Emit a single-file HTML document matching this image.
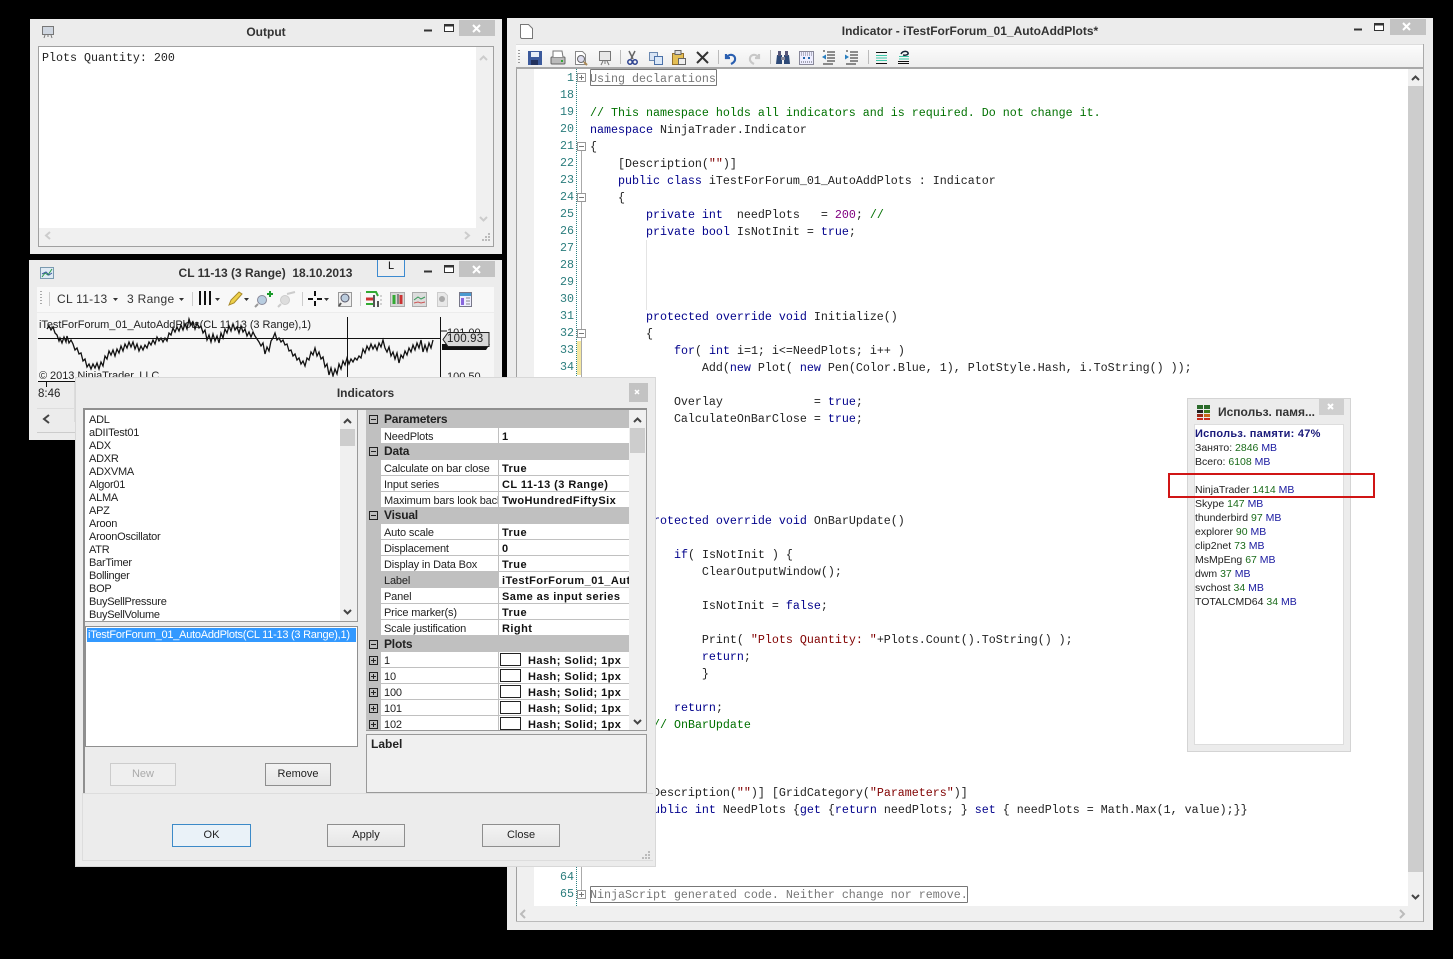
<!DOCTYPE html>
<html><head><meta charset="utf-8"><title>Indicator</title>
<style>
html,body{margin:0;padding:0;background:#000}
body{position:relative;width:1453px;height:959px;overflow:hidden;font-family:"Liberation Sans",sans-serif;font-size:11px;color:#111}
div,pre,span.a,svg{position:absolute}
svg{overflow:visible}
.win{background:#ececec;box-sizing:border-box}
.title{font-weight:bold;font-size:12px;color:#333;text-align:center;white-space:nowrap}
.close{background:#c3c3c3}
.t{white-space:nowrap;line-height:16px}
pre{margin:0;font-family:"Liberation Mono",monospace;font-size:11.67px;line-height:17px;color:#222}
.k{color:#00008b}.c{color:#007000}.s{color:#800000}
.g{background:#c0c0c0}
.gh{font-weight:bold;font-size:12px;color:#222;letter-spacing:-.2px}
.row{left:381px;width:248px;height:15px;background:#fff}
.n{left:384px;white-space:nowrap;line-height:16px;color:#222;width:114px;overflow:hidden;letter-spacing:-.15px;margin-top:1px;height:14px}
.v{left:502px;white-space:nowrap;font-weight:bold;line-height:16px;color:#111;font-size:11px;letter-spacing:.45px;width:127px;overflow:hidden;margin-top:1px;height:15px}
.btn{box-sizing:border-box;border:1px solid #8e8e8e;background:linear-gradient(#f3f3f3,#e6e6e6);text-align:center;font-size:11px;line-height:21px;color:#222}
.swatch{left:500px;width:19px;height:11px;border:1px solid #222;background:#fff}
.m{left:1195px;white-space:nowrap;font-size:10.5px;line-height:14px;color:#222;margin-top:1px}
.gn{color:#1a6b1a}.bl{color:#1a1aa0}
.li{left:89px;white-space:nowrap;font-size:11px;letter-spacing:-.25px;line-height:13px;color:#222;margin-top:1px}
</style></head><body>

<!-- EDITOR WINDOW -->
<div class="win" style="left:507px;top:18px;width:926px;height:912px"></div>
<div class="title" style="left:507px;top:24px;width:926px">Indicator - iTestForForum_01_AutoAddPlots*</div>
<div class="close" style="left:1390px;top:19px;width:36px;height:16px"></div>
<div style="left:516px;top:44px;width:908px;height:25px;background:linear-gradient(#fcfcfc,#eeeeee);border-top:1px solid #ddd;box-sizing:border-box;border-bottom:2px solid #a8a8a8"></div>
<div style="left:516px;top:69px;width:908px;height:838px;background:#fff"></div>
<div style="left:516px;top:69px;width:1px;height:852px;background:#a0a0a0"></div>
<div style="left:517px;top:69px;width:17px;height:837px;background:#f0f0f0"></div>
<div style="left:1408px;top:69px;width:16px;height:838px;background:#f0f0f0"></div>
<div style="left:1408px;top:86px;width:16px;height:786px;background:#cdcdcd"></div>
<div style="left:517px;top:906px;width:907px;height:15px;background:#f0f0f0"></div>
<div style="left:516px;top:921px;width:908px;height:1px;background:#bbb"></div>
<div style="left:1423px;top:44px;width:1px;height:878px;background:#aaa"></div>
<div style="left:576px;top:69px;width:0;height:837px;border-left:1px dotted #2b7f7f"></div>
<div style="left:577px;top:341px;width:4px;height:34px;background:#f5e8a0"></div>
<div style="left:581px;top:151px;width:1px;height:740px;background:#aaa"></div>
<div style="left:646px;top:240px;width:1px;height:70px;background:#e4e4e4"></div>
<pre style="left:534px;top:70px;width:40px;text-align:right;color:#2b7d7d">1
18
19
20
21
22
23
24
25
26
27
28
29
30
31
32
33
34</pre>
<pre style="left:534px;top:869px;width:40px;text-align:right;color:#2b7d7d">64
65</pre>
<pre style="left:590px;top:71px"><span style="color:#777">Using declarations</span>

<span class="c">// This namespace holds all indicators and is required. Do not change it.</span>
<span class="k">namespace</span> NinjaTrader.Indicator
{
    [Description(<span class="s">""</span>)]
    <span class="k">public class</span> iTestForForum_01_AutoAddPlots : Indicator
    {
        <span class="k">private int</span>  needPlots   = <span style="color:#800080">200</span>; <span class="c">//</span>
        <span class="k">private bool</span> IsNotInit = <span class="k">true</span>;




        <span class="k">protected override void</span> Initialize()
        {
            <span class="k">for</span>( <span class="k">int</span> i=1; i&lt;=NeedPlots; i++ )
                Add(<span class="k">new</span> Plot( <span class="k">new</span> Pen(Color.Blue, 1), PlotStyle.Hash, i.ToString() ));

            Overlay             = <span class="k">true</span>;
            CalculateOnBarClose = <span class="k">true</span>;





        <span class="k">protected override void</span> OnBarUpdate()

            <span class="k">if</span>( IsNotInit ) {
                ClearOutputWindow();

                IsNotInit = <span class="k">false</span>;

                Print( <span class="s">"Plots Quantity: "</span>+Plots.Count().ToString() );
                <span class="k">return</span>;
                }

            <span class="k">return</span>;
        }<span class="c">// OnBarUpdate</span>



        [Description(<span class="s">""</span>)] [GridCategory(<span class="s">"Parameters"</span>)]
        <span class="k">public int</span> NeedPlots {<span class="k">get</span> {<span class="k">return</span> needPlots; } <span class="k">set</span> { needPlots = Math.Max(1, value);}}




<span style="color:#777">NinjaScript generated code. Neither change nor remove.</span></pre>
<div style="left:590px;top:69px;width:125px;height:15px;border:1px solid #777;border-radius:1px"></div>
<div style="left:590px;top:886px;width:376px;height:15px;border:1px solid #777;border-radius:1px"></div>

<svg style="left:0;top:0" width="1453" height="959" fill="none">
<!-- fold boxes -->
<g stroke="#999" fill="#fff"><rect x="577.500" y="73.500" width="8" height="8"/><rect x="577.500" y="142.500" width="8" height="8"/><rect x="577.500" y="193.500" width="8" height="8"/><rect x="577.500" y="329.500" width="8" height="8"/><rect x="577.500" y="890.500" width="8" height="8"/></g>
<path d="M579 77.500h5M581.500 75v5M579 146.500h5M579 197.500h5M579 333.500h5M579 894.500h5M581.500 892v5" stroke="#777"/>
<!-- editor doc icon -->
<path d="M520.500 24.500h8l4 4v10h-11l-1-1z" fill="#fff" stroke="#777"/>
<!-- grip -->
<path d="M519 50v1M519 53v1M519 56v1M519 59v1M519 62v1" stroke="#999" stroke-width="2"/>
<!-- editor min/max -->
<path d="M1354 29.500h8" stroke="#333" stroke-width="2"/><rect x="1374.500" y="23.500" width="9" height="7" stroke="#333" fill="#fff"/><path d="M1374 24.500h10" stroke="#333" stroke-width="2"/>
<path d="M1403 23l7 7M1410 23l-7 7" stroke="#fff" stroke-width="2"/>
<!-- editor toolbar -->
<rect x="528" y="51" width="14" height="14" fill="#3c5a9c"/><rect x="531" y="52" width="8" height="5" fill="#e8eef8"/><rect x="531" y="60" width="7" height="5" fill="#22315c"/>
<rect x="551" y="57" width="14" height="7" rx="1" fill="#bbb" stroke="#666"/><path d="M553 57v-6h9l1 6" fill="#fff" stroke="#777"/><rect x="561" y="60" width="2" height="2" fill="#3a3"/>
<path d="M575.500 51.500h7l3 3v10h-10z" fill="#fff" stroke="#888"/><circle cx="581" cy="59" r="3.500" stroke="#666" fill="#dde"/><path d="M584 62l3 3" stroke="#a85" stroke-width="2"/>
<rect x="599.500" y="51.500" width="11" height="9" fill="#e8e8e8" stroke="#777"/><path d="M603 61l-2 4M607 61l2 4M605 61v3" stroke="#777"/>
<path d="M620.500 50v14" stroke="#bbb"/>
<path d="M629 51l4 8M635 51l-4 8" stroke="#666" stroke-width="1.500"/><circle cx="630" cy="62" r="2.200" stroke="#2a3f8f" stroke-width="1.500"/><circle cx="635" cy="62" r="2.200" stroke="#2a3f8f" stroke-width="1.500"/>
<rect x="649.500" y="52.500" width="8" height="8" fill="#d8e4f4" stroke="#6a88b0"/><rect x="654.500" y="56.500" width="8" height="8" fill="#dbe8f8" stroke="#4a70a8"/>
<rect x="672.500" y="53.500" width="11" height="11" fill="#e4bf55" stroke="#96702a"/><rect x="675" y="50.500" width="6" height="4" fill="#ddd" stroke="#666"/><rect x="678.500" y="58.500" width="7" height="6" fill="#eee" stroke="#666"/>
<path d="M697 52l11 11M708 52l-11 11" stroke="#333" stroke-width="2"/>
<path d="M718.500 50v14" stroke="#bbb"/>
<path d="M726 54v4h4M727 57c3-4 9-2 8 3-.5 2-2 3-4 4" stroke="#2a5fb0" stroke-width="2.200"/>
<path d="M759 54v4h-4M758 57c-3-4-9-2-8 3 .5 2 2 3 4 4" stroke="#c8c8c8" stroke-width="2.200"/>
<path d="M770.500 50v14" stroke="#bbb"/>
<path d="M777 55h5v9h-6zM784 55h5l1 9h-6z" fill="#2e4a78"/><rect x="778" y="51" width="3" height="5" fill="#557"/><rect x="785" y="51" width="3" height="5" fill="#557"/><rect x="781" y="57" width="4" height="3" fill="#889"/>
<rect x="799.500" y="51.500" width="14" height="13" fill="#eef" stroke="#889"/><path d="M801 53h11M801 55h11" stroke="#778" stroke-dasharray="1 1"/><path d="M803 58h2M808 58h2" stroke="#26a" stroke-width="2"/><path d="M801 62h11" stroke="#556" stroke-dasharray="1 1"/>
<path d="M827 52h8M827 55h8M827 58h8M827 61h8M823 64h10M823 51h2" stroke="#222"/><path d="M822 57l4-2.500v5z" fill="#2a7fbf"/>
<path d="M850 52h8M850 55h8M850 58h8M850 61h8M846 64h10M846 51h2" stroke="#222"/><path d="M849 57l-4-2.500v5z" fill="#2a7fbf"/>
<path d="M868.500 50v14" stroke="#bbb"/>
<path d="M876 52.500h11M876 63.500h11" stroke="#111"/><path d="M876 55.500h11M876 58h11M876 60.500h11" stroke="#3cc8a8"/>
<path d="M898 61.500h11M898 63.500h11" stroke="#111"/><path d="M899 56.500h10M899 59h10" stroke="#3cc8a8"/><path d="M901 54c2-4 8-3 7 0-.5 1-3 1.500-5 1" stroke="#123" stroke-width="1.500"/>
<!-- editor scroll arrows -->
<path d="M1412 80l3.500-3.500 3.500 3.500" stroke="#444" stroke-width="2"/><path d="M1412 895l3.500 3.500 3.500-3.500" stroke="#444" stroke-width="2"/><path d="M525 910l-4 4 4 4" stroke="#bbb" stroke-width="2"/><path d="M1400 910l4 4-4 4" stroke="#bbb" stroke-width="2"/>
</svg>

<!-- OUTPUT WINDOW -->
<div class="win" style="left:30px;top:19px;width:472px;height:235px"></div>
<div class="title" style="left:30px;top:25px;width:472px">Output</div>
<div class="close" style="left:459px;top:20px;width:36px;height:16px"></div>
<div style="left:38px;top:46px;width:456px;height:201px;box-sizing:border-box;border:1px solid #a0a0a0;background:#f0f0f0"></div>
<div style="left:39px;top:47px;width:437px;height:181px;background:#fff"></div>
<pre style="left:42px;top:50px;color:#222">Plots Quantity: 200</pre>
<svg style="left:0;top:0" width="510" height="260" fill="none">
<rect x="42.500" y="26.500" width="11" height="8" fill="#cfd6e0" stroke="#777"/><path d="M45 35l-1 3M51 35l1 3M48 35v2" stroke="#777"/>
<path d="M424 30.500h8" stroke="#333" stroke-width="2"/><rect x="444.500" y="24.500" width="9" height="7" stroke="#333" fill="#fff"/><path d="M444 25.500h10" stroke="#333" stroke-width="2"/>
<path d="M473 25l7 7M480 25l-7 7" stroke="#fff" stroke-width="2"/>
<path d="M480 60l3.500-3.500 3.500 3.500" stroke="#ccc" stroke-width="2"/><path d="M480 217l3.500 3.500 3.500-3.500" stroke="#ccc" stroke-width="2"/><path d="M50 232l-4 3.500 4 3.500" stroke="#ccc" stroke-width="2"/><path d="M465 232l4 3.500-4 3.500" stroke="#ccc" stroke-width="2"/>
<path d="M488 233h2v2h-2zM485 236h2v2h-2zM488 236h2v2h-2zM482 239h2v2h-2zM485 239h2v2h-2zM488 239h2v2h-2z" fill="#bbb"/>
</svg>

<!-- CHART WINDOW -->
<div class="win" style="left:29px;top:260px;width:473px;height:180px"></div>
<div class="title" style="left:29px;top:266px;width:473px">CL 11-13 (3 Range)&nbsp; 18.10.2013</div>
<div class="close" style="left:459px;top:261px;width:36px;height:16px"></div>
<div style="left:377px;top:260px;width:28px;height:17px;box-sizing:border-box;border:1px solid #3c8ad0;border-top:none;background:#efefef;text-align:center;font-size:11px;line-height:13px">L</div>
<div style="left:37px;top:287px;width:457px;height:25px;background:#f8f8f8"></div>
<div class="t" style="left:57px;top:291px;font-size:12px;letter-spacing:.3px;color:#333">CL 11-13</div>
<div class="t" style="left:127px;top:291px;font-size:12px;letter-spacing:.3px;color:#333">3 Range</div>
<div style="left:37px;top:313px;width:457px;height:69px;background:#f6f6f6"></div>
<div class="t" style="left:39px;top:317px;font-size:11px;color:#222;letter-spacing:-.05px">iTestForForum_01_AutoAddPlots(CL 11-13 (3 Range),1)</div>
<div class="t" style="left:39px;top:368px;font-size:11px;color:#222;letter-spacing:-.05px">© 2013 NinjaTrader, LLC</div>
<div class="t" style="left:38px;top:386px;font-size:11.500px;color:#222">8:46</div>
<div class="t" style="left:447px;top:325px;font-size:11px;color:#222">101.00</div>
<div class="t" style="left:447px;top:369px;font-size:11px;color:#222">100.50</div>
<svg style="left:0;top:0" width="510" height="445" fill="none">
<rect x="40.500" y="267.500" width="13" height="11" fill="#dfeaf4" stroke="#7a9ab0"/><path d="M42 277l3-4 3 2 4-6" stroke="#2a9a4a"/><path d="M42 274l4-2 3 3 3-2" stroke="#3a5a9a"/>
<path d="M424 271.500h8" stroke="#333" stroke-width="2"/><rect x="444.500" y="265.500" width="9" height="7" stroke="#333" fill="#fff"/><path d="M444 266.500h10" stroke="#333" stroke-width="2"/>
<path d="M473 266l7 7M480 266l-7 7" stroke="#fff" stroke-width="2"/>
<!-- toolbar -->
<path d="M41 291v1M41 294v1M41 297v1M41 300v1M41 303v1" stroke="#aaa" stroke-width="2"/><path d="M49.500 292v14M192.500 292v14M302.500 292v14M360.500 292v14" stroke="#ccc"/>
<path d="M113 298h5l-2.500 3zM179 298h5l-2.500 3zM215 298h5l-2.500 3zM244 298h5l-2.500 3zM324 298h5l-2.500 3z" fill="#333"/>
<path d="M200 291v14M205 291v14M210 291v14" stroke="#111" stroke-width="2"/>
<path d="M229 305l2-5 8-8 3 2-8 9z" fill="#eed04a" stroke="#a88a2a"/>
<circle cx="262" cy="300" r="4.500" fill="#b8cde0" stroke="#889"/><path d="M258 304l-3 3" stroke="#999" stroke-width="2"/><path d="M270 291v6M267 294h6" stroke="#1a9a2a" stroke-width="2"/>
<circle cx="285" cy="300" r="4.500" fill="#ddd" stroke="#ccc"/><path d="M281 304l-3 3" stroke="#ccc" stroke-width="2"/><path d="M287 294l8-2" stroke="#ccc" stroke-width="2"/>
<path d="M308 299h5M317 299h5M315 291v5M315 301v5" stroke="#111" stroke-width="2"/>
<rect x="338.500" y="292.500" width="13" height="14" fill="#eee" stroke="#999"/><circle cx="345" cy="298" r="4" fill="#bcd" stroke="#556"/><path d="M341 303l-2 3" stroke="#555" stroke-width="2"/>
<path d="M366 292h10l2 4M366 304h8" stroke="#3a3" stroke-width="2"/><path d="M366 299h9" stroke="#c33" stroke-width="3"/><path d="M373 296h1v10h-1M378 301v6" stroke="#555" stroke-width="2"/><path d="M380 296h2M380 300h2M380 304h2" stroke="#aaa"/>
<rect x="390.500" y="292.500" width="14" height="14" fill="#d8d8d8" stroke="#aaa"/><path d="M394 295v9" stroke="#3a3" stroke-width="3"/><path d="M398 294v10" stroke="#333" stroke-width="1"/><path d="M401 295v9" stroke="#c33" stroke-width="3"/>
<rect x="412.500" y="292.500" width="14" height="14" fill="#dcdcdc" stroke="#aaa"/><path d="M414 300l4-3 3 2 4-2" stroke="#3a9a5a"/><path d="M414 303l4-1 3 1 4-1" stroke="#c55"/>
<path d="M437.500 292.500h7l3 3v11h-10z" fill="#e8e8e8" stroke="#ccc"/><circle cx="442" cy="299" r="3" fill="#aaa"/>
<rect x="459.500" y="292.500" width="12" height="14" fill="#eef" stroke="#778"/><rect x="460" y="293" width="11" height="3" fill="#4a9ad0"/><rect x="461" y="298" width="3" height="7" fill="#86d"/><path d="M466 298h4M466 301h4M466 304h4" stroke="#888"/>
<!-- chart -->
<path d="M38 338.500h402M347.500 317v66M440.500 317v66M441 331h6" stroke="#111"/>
<polyline stroke="#111" stroke-width="1.300" points="47,329 49,326 51,330 53,327 55,333 57,335 59,341 60,338 62,343 64,337 66,342 67,336 69,343 71,340 73,344 75,350 77,348 79,354 81,353 83,361 85,359 87,367 89,364 91,369 93,364 95,368 97,363 99,369 101,362 103,366 105,356 107,359 109,351 111,355 113,350 115,356 117,349 119,353 121,346 123,351 125,344 127,348 129,342 131,347 133,342 135,349 137,344 139,351 141,346 143,350 145,345 147,348 149,342 151,345 153,340 155,344 157,337 159,341 161,338 163,342 165,338 167,341 169,333 171,335 173,328 175,332 177,327 179,331 181,325 183,330 185,324 187,329 189,319 191,325 193,322 195,329 197,323 199,328 201,326 203,333 205,330 207,340 209,335 211,342 213,334 215,341 217,336 219,343 221,333 223,338 225,329 227,333 229,326 231,331 233,324 235,330 237,327 239,333 241,326 243,332 245,329 247,336 249,332 251,337 253,332 255,336 257,339 259,342 261,346 263,343 265,354 267,347 269,351 271,341 273,338 275,333 277,340 279,338 281,342 283,340 285,345 287,344 289,351 291,350 293,356 295,354 297,360 299,358 301,364 303,361 305,366 307,358 309,360 311,352 313,355 315,348 317,356 319,352 321,359 323,357 325,367 327,364 329,375 331,368 333,376 335,369 337,374 339,364 341,369 343,361 345,365 347,358 349,364 351,359 353,362 355,358 357,360 359,356 361,358 363,349 365,353 367,346 369,350 371,344 373,349 375,345 377,350 379,343 381,347 383,340 385,348 387,352 389,347 391,356 393,352 395,359 397,353 399,363 401,355 403,358 405,351 407,355 409,348 411,352 413,345 415,350 417,343 419,348 421,340 423,352 425,345 427,351 429,343 431,348 433,340"/>
<path d="M442 344h48l-4 6h-44z" fill="#111"/>
<path d="M448 332.500h41v14h-41l-5-7z" fill="#d8d8d8" stroke="#222"/>
<path d="M38 381.500h37M46.500 382v5" stroke="#111"/>
<path d="M75 382v40" stroke="#ccc"/>
<path d="M49 415l-5 4 5 4" stroke="#444" stroke-width="2"/>
</svg>
<div class="t" style="left:447px;top:331px;font-size:11.500px;color:#222;letter-spacing:.2px">100.93</div>
<div style="left:37px;top:408px;width:38px;height:1px;background:#ddd"></div>
<div style="left:37px;top:432px;width:38px;height:1px;background:#ccc"></div>

<!-- MEMORY WIDGET -->
<div class="win" style="left:1187px;top:398px;width:164px;height:354px;border:1px solid #d4d4d4"></div>
<div style="left:1194px;top:424px;width:150px;height:321px;background:#fff;border:1px solid #ddd;box-sizing:border-box"></div>
<div class="close" style="left:1319px;top:399px;width:25px;height:16px;background:#cfcfcf"></div>
<svg style="left:1187px;top:398px" width="164" height="30" fill="none">
<rect x="10" y="7" width="6" height="4" fill="#2a6a2a"/><rect x="17" y="7" width="6" height="4" fill="#2a6a2a"/><rect x="10" y="12" width="6" height="3" fill="#222"/><rect x="17" y="12" width="6" height="3" fill="#3a7a1a"/><rect x="10" y="16" width="6" height="3" fill="#9a2a1a"/><rect x="17" y="16" width="6" height="3" fill="#c86a1a"/><rect x="10" y="20" width="6" height="2" fill="#c82a1a"/><rect x="17" y="20" width="6" height="2" fill="#c82a1a"/>
<path d="M141 6l5 5M146 6l-5 5" stroke="#fff" stroke-width="2"/>
</svg>
<div class="title" style="left:1218px;top:405px;text-align:left;font-size:12px;color:#333">Использ. памя...</div>
<div class="m" style="top:426px;font-weight:bold;font-size:11px;letter-spacing:.25px;color:#1a1a7a">Использ. памяти: 47%</div>
<div class="m" style="top:440px">Занято: <span class="gn">2846</span> <span class="bl">MB</span></div>
<div class="m" style="top:454px">Всего: <span class="gn">6108</span> <span class="bl">MB</span></div>
<div class="m" style="top:482px">NinjaTrader <span class="gn">1414</span> <span class="bl">MB</span></div>
<div class="m" style="top:496px">Skype <span class="gn">147</span> <span class="bl">MB</span></div>
<div class="m" style="top:510px">thunderbird <span class="gn">97</span> <span class="bl">MB</span></div>
<div class="m" style="top:524px">explorer <span class="gn">90</span> <span class="bl">MB</span></div>
<div class="m" style="top:538px">clip2net <span class="gn">73</span> <span class="bl">MB</span></div>
<div class="m" style="top:552px">MsMpEng <span class="gn">67</span> <span class="bl">MB</span></div>
<div class="m" style="top:566px">dwm <span class="gn">37</span> <span class="bl">MB</span></div>
<div class="m" style="top:580px">svchost <span class="gn">34</span> <span class="bl">MB</span></div>
<div class="m" style="top:594px">TOTALCMD64 <span class="gn">34</span> <span class="bl">MB</span></div>
<div style="left:1168px;top:473px;width:207px;height:25px;box-sizing:border-box;border:2px solid #d01515"></div>

<!-- INDICATORS DIALOG -->
<div class="win" style="left:75px;top:377px;width:581px;height:490px;border:1px solid #d8d8d8"></div>
<div class="title" style="left:75px;top:386px;width:581px">Indicators</div>
<div class="close" style="left:629px;top:383px;width:19px;height:19px"></div>
<div style="left:83px;top:408px;width:2px;height:385px;background:#8f8f8f"></div>
<div style="left:83px;top:408px;width:564px;height:2px;background:#8f8f8f"></div>
<div style="left:85px;top:410px;width:273px;height:212px;background:#fff;box-sizing:border-box;border:1px solid #999;border-top:none;border-left:none"></div>
<div style="left:340px;top:410px;width:17px;height:211px;background:#f0f0f0"></div>
<div style="left:340px;top:429px;width:15px;height:17px;background:#cdcdcd"></div>
<div class="li" style="top:413px">ADL</div><div class="li" style="top:426px">aDIITest01</div><div class="li" style="top:439px">ADX</div><div class="li" style="top:452px">ADXR</div><div class="li" style="top:465px">ADXVMA</div><div class="li" style="top:478px">Algor01</div><div class="li" style="top:491px">ALMA</div><div class="li" style="top:504px">APZ</div><div class="li" style="top:517px">Aroon</div><div class="li" style="top:530px">AroonOscillator</div><div class="li" style="top:543px">ATR</div><div class="li" style="top:556px">BarTimer</div><div class="li" style="top:569px">Bollinger</div><div class="li" style="top:582px">BOP</div><div class="li" style="top:595px">BuySellPressure</div><div class="li" style="top:608px">BuySellVolume</div>
<div style="left:85px;top:626px;width:273px;height:121px;background:#fff;box-sizing:border-box;border:1px solid #8f8f8f"></div>
<div style="left:87px;top:628px;width:269px;height:14px;background:#3399ff"></div>
<div class="li" style="left:88px;top:628px;color:#fff">iTestForForum_01_AutoAddPlots(CL 11-13 (3 Range),1)</div>
<div class="btn" style="left:110px;top:763px;width:66px;height:23px;color:#aaa;border-color:#ccc;background:#efefef">New</div>
<div class="btn" style="left:265px;top:763px;width:66px;height:23px">Remove</div>
<div style="left:83px;top:793px;width:570px;height:1px;background:#ddd"></div>
<div style="left:82px;top:793px;width:1px;height:67px;background:#ddd"></div>
<div style="left:82px;top:860px;width:571px;height:1px;background:#ddd"></div>
<div class="btn" style="left:172px;top:824px;width:79px;height:23px;border-color:#3c8ac8;background:#eaf2f8">OK</div>
<div class="btn" style="left:327px;top:824px;width:78px;height:23px">Apply</div>
<div class="btn" style="left:482px;top:824px;width:78px;height:23px">Close</div>

<!-- property grid -->
<div style="left:366px;top:410px;width:281px;height:321px;background:#c0c0c0;box-sizing:border-box;border-right:1px solid #999;border-bottom:1px solid #999"></div>
<div style="left:629px;top:410px;width:17px;height:320px;background:#f0f0f0"></div>
<div style="left:630px;top:428px;width:15px;height:25px;background:#cdcdcd"></div>
<div class="row" style="top:428px"></div>
<div class="row" style="top:460px"></div><div class="row" style="top:476px"></div><div class="row" style="top:492px"></div>
<div class="row" style="top:524px"></div><div class="row" style="top:540px"></div><div class="row" style="top:556px"></div><div class="row" style="top:572px"></div><div class="row" style="top:588px"></div><div class="row" style="top:604px"></div><div class="row" style="top:620px"></div>
<div class="row" style="top:652px"></div><div class="row" style="top:668px"></div><div class="row" style="top:684px"></div><div class="row" style="top:700px"></div><div class="row" style="top:716px;height:14px"></div>
<div style="left:381px;top:572px;width:117px;height:15px;background:#c0c0c0"></div>
<div style="left:498px;top:428px;width:1px;height:302px;background:#c0c0c0"></div>

<div class="gh t" style="left:384px;top:411px">Parameters</div>
<div class="gh t" style="left:384px;top:443px">Data</div>
<div class="gh t" style="left:384px;top:507px">Visual</div>
<div class="gh t" style="left:384px;top:636px">Plots</div>
<div class="n" style="top:428px">NeedPlots</div><div class="v" style="top:428px">1</div>
<div class="n" style="top:460px">Calculate on bar close</div><div class="v" style="top:460px">True</div>
<div class="n" style="top:476px">Input series</div><div class="v" style="top:476px">CL 11-13 (3 Range)</div>
<div class="n" style="top:492px">Maximum bars look back</div><div class="v" style="top:492px">TwoHundredFiftySix</div>
<div class="n" style="top:524px">Auto scale</div><div class="v" style="top:524px">True</div>
<div class="n" style="top:540px">Displacement</div><div class="v" style="top:540px">0</div>
<div class="n" style="top:556px">Display in Data Box</div><div class="v" style="top:556px">True</div>
<div class="n" style="top:572px">Label</div><div class="v" style="top:572px">iTestForForum_01_AutoAddPlots</div>
<div class="n" style="top:588px">Panel</div><div class="v" style="top:588px">Same as input series</div>
<div class="n" style="top:604px">Price marker(s)</div><div class="v" style="top:604px">True</div>
<div class="n" style="top:620px">Scale justification</div><div class="v" style="top:620px">Right</div>
<div class="n" style="top:652px">1</div><div class="swatch" style="top:653px"></div><div class="v" style="left:528px;width:100px;top:652px">Hash; Solid; 1px</div>
<div class="n" style="top:668px">10</div><div class="swatch" style="top:669px"></div><div class="v" style="left:528px;width:100px;top:668px">Hash; Solid; 1px</div>
<div class="n" style="top:684px">100</div><div class="swatch" style="top:685px"></div><div class="v" style="left:528px;width:100px;top:684px">Hash; Solid; 1px</div>
<div class="n" style="top:700px">101</div><div class="swatch" style="top:701px"></div><div class="v" style="left:528px;width:100px;top:700px">Hash; Solid; 1px</div>
<div class="n" style="top:716px">102</div><div class="swatch" style="top:717px"></div><div class="v" style="left:528px;width:100px;top:716px;height:14px">Hash; Solid; 1px</div>

<div style="left:366px;top:734px;width:281px;height:59px;box-sizing:border-box;border:1px solid #999;background:#f0f0f0"></div>
<div class="t" style="left:371px;top:736px;font-weight:bold;font-size:12px;color:#222">Label</div>

<svg style="left:0;top:0" width="660" height="870" fill="none">
<path d="M635 390l4 4M639 390l-4 4" stroke="#fff" stroke-width="1.500"/>
<g stroke="#222"><rect x="369.500" y="415.500" width="8" height="8"/><rect x="369.500" y="447.500" width="8" height="8"/><rect x="369.500" y="511.500" width="8" height="8"/><rect x="369.500" y="640.500" width="8" height="8"/><rect x="369.500" y="656.500" width="8" height="8"/><rect x="369.500" y="672.500" width="8" height="8"/><rect x="369.500" y="688.500" width="8" height="8"/><rect x="369.500" y="704.500" width="8" height="8"/><rect x="369.500" y="720.500" width="8" height="8"/>
<path d="M371 419.500h5M371 451.500h5M371 515.500h5M371 644.500h5M371 660.500h5M373.500 658v5M371 676.500h5M373.500 674v5M371 692.500h5M373.500 690v5M371 708.500h5M373.500 706v5M371 724.500h5M373.500 722v5"/></g>
<path d="M344 423l3.500-3.500 3.500 3.500" stroke="#444" stroke-width="2"/><path d="M344 610l3.500 3.500 3.500-3.500" stroke="#444" stroke-width="2"/>
<path d="M634 422l3.500-3.500 3.500 3.500" stroke="#444" stroke-width="2"/><path d="M634 720l3.500 3.500 3.500-3.500" stroke="#444" stroke-width="2"/>
<path d="M648 851h2v2h-2zM645 854h2v2h-2zM648 854h2v2h-2zM642 857h2v2h-2zM645 857h2v2h-2zM648 857h2v2h-2z" fill="#bbb"/>
</svg>
</body></html>
